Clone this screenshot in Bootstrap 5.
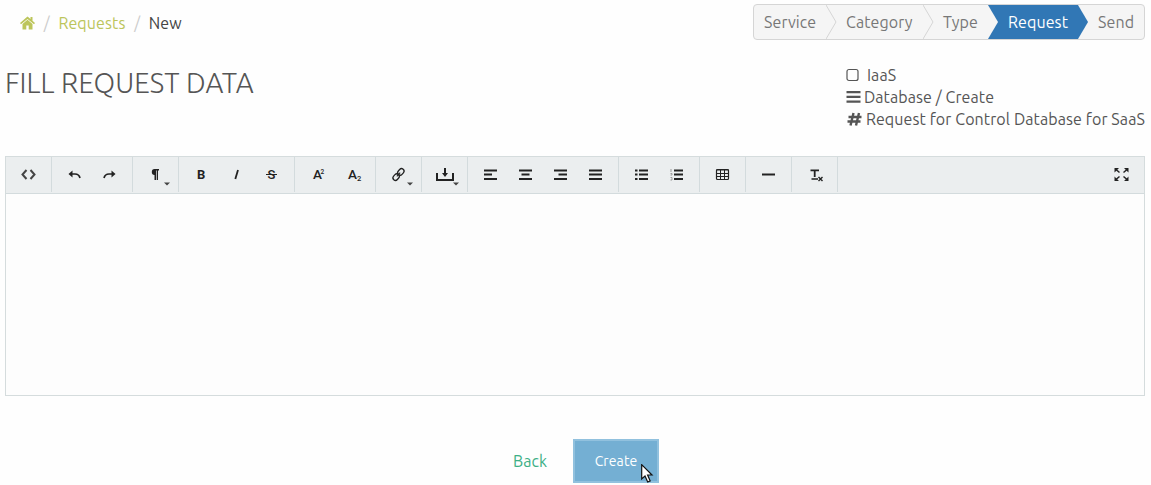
<!DOCTYPE html>
<html lang="en">
<head>
<meta charset="utf-8">
<meta name="viewport" content="width=device-width, initial-scale=1">
<title>Fill request data</title>
<link href="https://cdn.jsdelivr.net/npm/bootstrap@5.3.0/dist/css/bootstrap.min.css" rel="stylesheet">
<style>
body{font-family:Ubuntu,"Noto Sans",sans-serif;font-size:16px;line-height:22px;color:#555;background:#fefefe;letter-spacing:.1px;overflow:hidden}
.page{padding:4px 6px 0 5px}
.top{height:36px}
.crumbs{--bs-breadcrumb-item-padding-x:8.7px;--bs-breadcrumb-divider-color:#ccc;padding:8px 15px 0}
.crumbs a,.crumbs svg{color:#bcc55b;fill:#bcc55b}
.crumbs .active{color:#444}
.wizard{height:36px;border:1px solid #d5d5d5;border-radius:4px;background:#f5f5f5;color:#777;overflow:hidden}
.step{position:relative;padding:6px 0 6px 20px}
.step svg{position:absolute;left:0;top:0}
.step.current{background:#3177b5;color:#fff}
.w1{width:72px;padding-left:10px}.w2{width:97px}.w3{width:65px}.w4{width:90px}.w5{width:66px}
.heading{height:116px;padding-top:24px}
.heading h1{font:300 28px/38px Ubuntu,"Open Sans",sans-serif;letter-spacing:.06px}
.facts svg{fill:#555;display:block}
.editor{height:240px;border:1px solid #d5dcdd;background:#fdfdfd}
.tools{height:37px;background:#ebeeef;border-bottom:1px solid #d3dbdd;color:#222}
.grp{height:35px;padding:0 5px;border-right:1px solid #d3dbdd}
.full{padding-right:5px}
.tools button{width:35px;height:35px;padding:0;border:0;background:none;color:#222;display:block}
.tools svg{display:block;fill:none;stroke:#222;stroke-width:2}
.tools text{fill:#222;stroke:none;font-family:Roboto,sans-serif;font-weight:500;letter-spacing:0}
.tools .f{fill:#222;stroke:none}
.tools .car{fill:#444;stroke:none}
.actions{padding-top:43px}
.back{margin-left:508px;width:60px;padding-top:11px;color:#3caf85}
.create{width:86px;height:44px;border:2px solid #91c1de;background:#74afd3;color:#fff;font-size:14px;letter-spacing:.1px}
.pointer{position:absolute;left:68px;top:25px}
</style>
</head>
<body>
<main class="page">
<div class="top d-flex justify-content-between">
<ol class="breadcrumb crumbs mb-0">
<li class="breadcrumb-item d-flex"><a href="#" aria-label="Home"><svg class="d-block" width="15" height="22" viewBox="0 0 15 22"><path d="M7.500 4.500 0 11l1 1.200 6.500-5.300L14 12.200l1-1.200-2.500-2.200V5h-2v2.100z"/><path d="M2.500 12 7.500 7.800 12.500 12v5.500H8.700v-4H6.300v4H2.500z"/></svg></a></li>
<li class="breadcrumb-item"><a href="#" class="text-decoration-none">Requests</a></li>
<li class="breadcrumb-item active">New</li>
</ol>
<div class="wizard d-flex">
<div class="step w1">Service</div>
<div class="step w2"><svg width="11" height="34" fill="none" stroke="#d5d5d5"><path d="M0 0 10 17 0 34"/></svg>Category</div>
<div class="step w3"><svg width="11" height="34" fill="none" stroke="#d5d5d5"><path d="M0 0 10 17 0 34"/></svg>Type</div>
<div class="step w4 current"><svg width="11" height="34" fill="#f5f5f5"><path d="M0 0 10 17 0 34"/></svg>Request</div>
<div class="step w5"><svg width="11" height="34" fill="#3177b5"><path d="M0 0 10 17 0 34"/></svg>Send</div>
</div>
</div>
<div class="heading d-flex justify-content-between">
<h1 class="mb-0">FILL REQUEST DATA</h1>
<div class="facts">
<div class="d-flex"><svg width="21" height="22"><rect x="1" y="5.500" width="11" height="11" rx="2" fill="none" stroke="#555" stroke-width="1.200"/></svg>IaaS</div>
<div class="d-flex"><svg width="18" height="22"><path d="M.5 5h14v2.200H.5zM.5 9.800h14V12H.5zM.5 14.600h14v2.200H.5z"/></svg>Database / Create</div>
<div class="d-flex"><svg width="20" height="22"><path d="M2.500 9h13M1.500 13.500h13M7.500 5 4.500 17.500M13 5l-3 12.500" stroke="#555" stroke-width="2.400"/></svg><span>Request for Control Database for SaaS</span></div>
</div>
</div>
<div class="editor">
<div class="tools d-flex">
<div class="grp d-flex"><button aria-label="HTML"><svg width="35" height="35"><path d="M15.500 13 11.500 17.500l4 4.500M19.500 13l4 4.500-4 4.500" stroke="#444"/></svg></button></div>
<div class="grp d-flex"><button aria-label="Undo"><svg width="35" height="35"><path d="M13 17h5q4 0 5 4" stroke-width="1.700"/><path class="f" d="M11.500 17l4-3.500v7z"/></svg></button><button aria-label="Redo"><svg width="35" height="35"><path d="M22 17h-5q-4 0-5 4" stroke-width="1.700"/><path class="f" d="M23.500 17l-4-3.500v7z"/></svg></button></div>
<div class="grp d-flex"><button aria-label="Format"><svg width="35" height="35"><path class="f" d="M21 12v1.500h-1V23h-1.300v-9.500h-.7V23h-1.500v-5q-2.700 0-2.700-3t2.700-3z"/><path class="car" d="M26 25.500h6l-3 3z"/></svg></button></div>
<div class="grp d-flex"><button aria-label="Bold"><svg width="35" height="35"><text x="13" y="22" font-size="13" stroke-width="0" style="font-weight:700">B</text></svg></button><button aria-label="Italic"><svg width="35" height="35"><path d="M19 13 16.300 22" stroke-width="1.800"/></svg></button><button aria-label="Strikethrough"><svg width="35" height="35"><text x="13.500" y="22" font-size="13">S</text><path d="M12 17.500h11" stroke-width="1"/></svg></button></div>
<div class="grp d-flex"><button aria-label="Superscript"><svg width="35" height="35"><text x="13" y="22" font-size="13.500">A</text><text x="20.500" y="17" font-size="6.500">2</text></svg></button><button aria-label="Subscript"><svg width="35" height="35"><text x="13" y="22" font-size="13.500">A</text><text x="22" y="24" font-size="7.500">2</text></svg></button></div>
<div class="grp d-flex"><button aria-label="Link"><svg width="35" height="35"><g transform="rotate(-48 17.500 17.500)" stroke-width="1.300"><rect x="10.500" y="15" width="7" height="5" rx="2.500"/><rect x="17.500" y="15" width="7" height="5" rx="2.500"/><path d="M15 17.500h5" stroke-width="1"/></g><path class="car" d="M26 25.500h6l-3 3z"/></svg></button></div>
<div class="grp d-flex"><button aria-label="Insert"><svg width="35" height="35"><path d="M10 16v7h16v-7M18 11v6"/><path class="f" d="M15 16h6l-3 4z"/><path class="car" d="M26 25.500h6l-3 3z"/></svg></button></div>
<div class="grp d-flex"><button aria-label="Align left"><svg width="35" height="35"><path d="M11 13.500h13M11 17.500h8M11 22h13"/></svg></button><button aria-label="Align center"><svg width="35" height="35"><path d="M11 13.500h13M13.500 17.500h8M11 22h13"/></svg></button><button aria-label="Align right"><svg width="35" height="35"><path d="M11 13.500h13M15.500 17.500h8.500M11 22h13"/></svg></button><button aria-label="Justify"><svg width="35" height="35"><path d="M11 13.500h13M11 17.500h13M11 22h13"/></svg></button></div>
<div class="grp d-flex"><button aria-label="Bulleted list"><svg width="35" height="35"><path d="M11 13.500h2.500M15 13.500h9M11 17.500h2.500M15 17.500h9M11 22h2.500M15 22h9"/></svg></button><button aria-label="Numbered list"><svg width="35" height="35"><path d="M15 13.500h9M15 17.500h9M15 22h9"/><path d="M12 12v3M11.500 16.500h1.500v1.500h-1.500M11.500 20.500h1.500v2.500h-1.500" stroke="#999" stroke-width="1"/></svg></button></div>
<div class="grp d-flex"><button aria-label="Table"><svg width="35" height="35"><rect x="11.500" y="12.500" width="12" height="10" rx="1" stroke-width="1.200"/><path d="M11 13h13M11.500 16.500h12M11.500 19.500h12M15.500 12v11M19.500 12v11" stroke-width="1"/></svg></button></div>
<div class="grp d-flex"><button aria-label="Line"><svg width="35" height="35"><path d="M11 17.500h13"/></svg></button></div>
<div class="grp d-flex"><button aria-label="Clear formatting"><svg width="35" height="35"><path d="M13.500 13.300h8.500M17.700 13.300V20" stroke-width="1.800"/><path d="M14.500 22h6.500M21.500 20l4 4M25.500 20l-4 4" stroke-width="1.400"/></svg></button></div>
<div class="ms-auto full"><button aria-label="Fullscreen"><svg width="35" height="35"><path d="M12 12.500l3.500 3M23 12.500l-3.500 3M12 22.500l3.500-3M23 22.500l-3.500-3" stroke-width="1.500"/><path class="f" d="M10.500 11h4.500l-4.500 4.500zM24.500 11h-4.500l4.500 4.500zM10.500 24h4.500l-4.500-4.500zM24.500 24h-4.500l4.500-4.500z"/></svg></button></div>
</div>
</div>
<div class="actions d-flex">
<a class="back text-decoration-none" href="#">Back</a>
<div class="position-relative"><button class="create p-0">Create</button>
<svg class="pointer" width="16" height="20"><path d="M.7.7V15l3.300-3 2.700 6 2.500-1.100L6.600 11H11z" fill="#fff" stroke="#111" stroke-width="1.200"/></svg></div>
</div>
</main>
<script src="https://cdn.jsdelivr.net/npm/bootstrap@5.3.0/dist/js/bootstrap.bundle.min.js"></script>
</body>
</html>
